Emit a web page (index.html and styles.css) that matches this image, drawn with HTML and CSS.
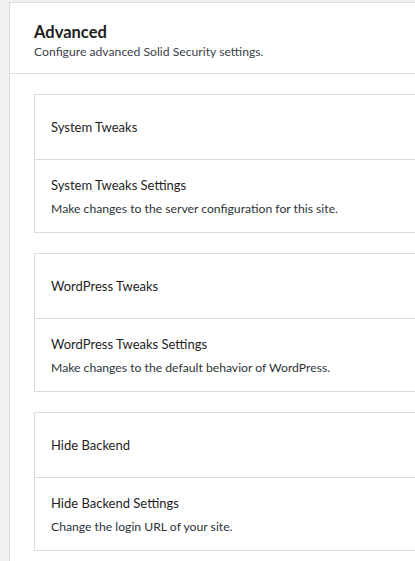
FILE: index.html
```html
<!DOCTYPE html>
<html lang="en">
<head>
<meta charset="utf-8">
<title>Advanced</title>
<link rel="stylesheet" href="styles.css">
</head>
<body>
<div class="panel">
  <header class="panel-head">
    <h1 class="panel-title">Advanced</h1>
    <p class="panel-sub">Configure advanced Solid Security settings.</p>
  </header>
  <div class="cards">
    <section class="card">
      <div class="card-head">System Tweaks</div>
      <div class="card-body">
        <h2 class="card-title">System Tweaks Settings</h2>
        <p class="card-desc">Make changes to the server configuration for this site.</p>
      </div>
    </section>
    <section class="card">
      <div class="card-head">WordPress Tweaks</div>
      <div class="card-body">
        <h2 class="card-title">WordPress Tweaks Settings</h2>
        <p class="card-desc">Make changes to the default behavior of WordPress.</p>
      </div>
    </section>
    <section class="card">
      <div class="card-head">Hide Backend</div>
      <div class="card-body">
        <h2 class="card-title">Hide Backend Settings</h2>
        <p class="card-desc">Change the login URL of your site.</p>
      </div>
    </section>
  </div>
</div>
</body>
</html>
```
FILE: styles.css
```css
html, body {
  margin: 0;
  padding: 0;
  overflow: hidden;
  background: #f0f0f1;
  font-family: "Lato", "Noto Sans", sans-serif;
  color: #2c3338;
}

.panel {
  margin: 2px 0 0 9px;
  width: 480px;
  min-height: 600px;
  background: #fff;
  border: 1px solid #dcdcde;
}

.panel-head {
  height: 71px;
  box-sizing: border-box;
  padding: 19px 24px 0;
  border-bottom: 1px solid #dcdcde;
}

.panel-title {
  margin: 0;
  font-size: 16.5px;
  line-height: 20px;
  font-weight: 700;
  color: #1e1e1e;
}

.panel-sub {
  margin: 1px 0 0;
  font-size: 12.2px;
  line-height: 18px;
  color: #3c434a;
}

.cards {
  display: flex;
  flex-direction: column;
  gap: 20px;
  padding: 20px 0 0 24px;
}

.card {
  border: 1px solid #dcdcde;
  background: #fff;
}

.card-head {
  height: 64px;
  display: flex;
  align-items: center;
  padding-left: 16px;
  font-size: 13px;
  color: #1e1e1e;
  border-bottom: 1px solid #dcdcde;
}

.card-body {
  height: 72px;
  box-sizing: border-box;
  padding: 16px 16px 0;
}

.card-title {
  margin: 0;
  font-size: 13px;
  line-height: 18px;
  font-weight: 400;
  color: #1e1e1e;
}

.card-desc {
  margin: 6px 0 0;
  font-size: 12.2px;
  line-height: 18px;
  color: #2c3338;
}
```
